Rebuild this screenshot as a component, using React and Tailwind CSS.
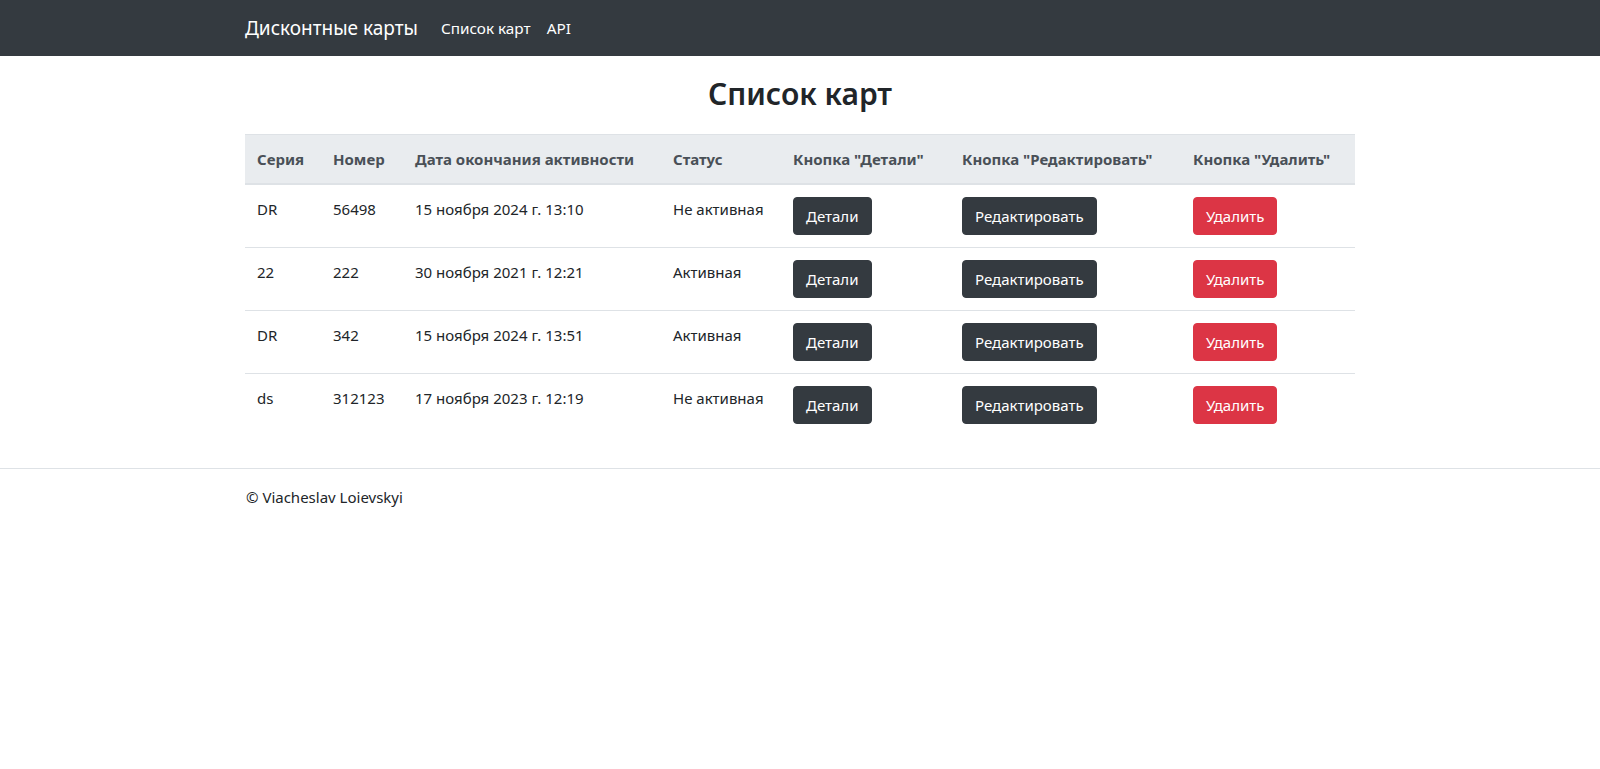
import React from "react";

const cards = [
  { series: "DR", number: "56498", date: "15 ноября 2024 г. 13:10", status: "Не активная" },
  { series: "22", number: "222", date: "30 ноября 2021 г. 12:21", status: "Активная" },
  { series: "DR", number: "342", date: "15 ноября 2024 г. 13:51", status: "Активная" },
  { series: "ds", number: "312123", date: "17 ноября 2023 г. 12:19", status: "Не активная" },
];

const headers = ["Серия", "Номер", "Дата окончания активности", "Статус", 'Кнопка "Детали"', 'Кнопка "Редактировать"', 'Кнопка "Удалить"'];

const font = { fontFamily: '"Noto Sans", "Open Sans", sans-serif' };

const App = () => {
  return (
    <div className="min-h-screen bg-white text-[#212529] text-[15px] leading-6" style={font}>
      {/* Navbar */}
      <nav className="h-[56px] bg-[#343a40]">
        <div className="w-[1110px] mx-auto h-full flex items-center">
          <span className="text-[19px] text-white mr-[23px] -mt-[1px]">Дисконтные карты</span>
          <a className="text-[15.3px] text-white mr-[16px]">Список карт</a>
          <a className="text-[15.3px] text-white">API</a>
        </div>
      </nav>

      {/* Main */}
      <main className="w-[1110px] mx-auto pb-[32px]">
        <h2 className="text-center text-[30px] font-semibold leading-[38px] mt-[19px] mb-[21px] text-[#212529]">
          Список карт
        </h2>
        <table className="w-full border-collapse table-fixed">
          <colgroup>
            <col className="w-[76px]" />
            <col className="w-[82px]" />
            <col className="w-[258px]" />
            <col className="w-[120px]" />
            <col className="w-[169px]" />
            <col className="w-[231px]" />
            <col className="w-[174px]" />
          </colgroup>
          <thead>
            <tr className="bg-[#e9ecef] text-[#495057] border-t border-[#dee2e6]">
              {headers.map((h) => (
                <th key={h} className="text-left font-bold px-3 py-3 whitespace-nowrap h-[49px] border-b-2 border-[#dee2e6]">
                  {h}
                </th>
              ))}
            </tr>
          </thead>
          <tbody>
            {cards.map((c, i) => (
              <tr key={i} className={i > 0 ? "border-t border-[#dee2e6]" : ""}>
                <td className="px-3 pt-3 align-top whitespace-nowrap">{c.series}</td>
                <td className="px-3 pt-3 align-top whitespace-nowrap">{c.number}</td>
                <td className="px-3 pt-3 align-top whitespace-nowrap">{c.date}</td>
                <td className="px-3 pt-3 align-top whitespace-nowrap">{c.status}</td>
                <td className="px-3 py-3 align-top">
                  <button className="bg-[#343a40] text-white rounded-[4px] px-3 h-[38px] border border-[#343a40]">Детали</button>
                </td>
                <td className="px-3 py-3 align-top">
                  <button className="bg-[#343a40] text-white rounded-[4px] px-3 h-[38px] border border-[#343a40]">Редактировать</button>
                </td>
                <td className="px-3 py-3 align-top">
                  <button className="bg-[#dc3545] text-white rounded-[4px] px-3 h-[38px] border border-[#dc3545]">Удалить</button>
                </td>
              </tr>
            ))}
          </tbody>
        </table>
      </main>

      {/* Footer */}
      <footer className="border-t border-[#dee2e6]">
        <div className="w-[1110px] mx-auto pt-4 pl-px">© Viacheslav Loievskyi</div>
      </footer>
    </div>
  );
};

export default App;
